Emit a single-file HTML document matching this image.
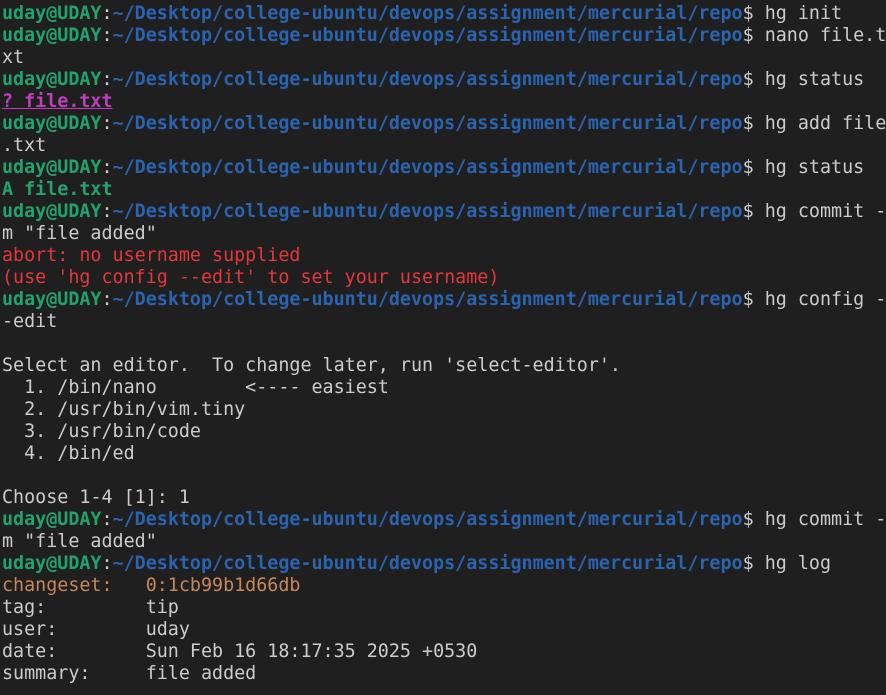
<!DOCTYPE html>
<html><head><meta charset="utf-8"><style>
html,body{margin:0;padding:0;background:#1f1f1f;width:886px;height:695px;overflow:hidden}
pre{margin:0;padding:3px 0 0 2px;font-family:"DejaVu Sans Mono","Liberation Mono",monospace;font-size:18.38px;line-height:22px;color:#cccccc;white-space:pre}
.g{color:#23a36b;font-weight:bold}
.b{color:#2a63b0;font-weight:bold}
.r{color:#e5373b}
.p{color:#bc3fbc;font-weight:bold;text-decoration:underline}
.a{color:#23a36b;font-weight:bold}
.o{color:#c7875a}
</style></head><body><pre><span class="g">uday@UDAY</span>:<span class="b">~/Desktop/college-ubuntu/devops/assignment/mercurial/repo</span>$ hg init
<span class="g">uday@UDAY</span>:<span class="b">~/Desktop/college-ubuntu/devops/assignment/mercurial/repo</span>$ nano file.t
xt
<span class="g">uday@UDAY</span>:<span class="b">~/Desktop/college-ubuntu/devops/assignment/mercurial/repo</span>$ hg status
<span class="p">? file.txt</span>
<span class="g">uday@UDAY</span>:<span class="b">~/Desktop/college-ubuntu/devops/assignment/mercurial/repo</span>$ hg add file
.txt
<span class="g">uday@UDAY</span>:<span class="b">~/Desktop/college-ubuntu/devops/assignment/mercurial/repo</span>$ hg status
<span class="a">A file.txt</span>
<span class="g">uday@UDAY</span>:<span class="b">~/Desktop/college-ubuntu/devops/assignment/mercurial/repo</span>$ hg commit -
m "file added"
<span class="r">abort: no username supplied</span>
<span class="r">(use 'hg config --edit' to set your username)</span>
<span class="g">uday@UDAY</span>:<span class="b">~/Desktop/college-ubuntu/devops/assignment/mercurial/repo</span>$ hg config -
-edit

Select an editor.  To change later, run 'select-editor'.
  1. /bin/nano        &lt;---- easiest
  2. /usr/bin/vim.tiny
  3. /usr/bin/code
  4. /bin/ed

Choose 1-4 [1]: 1
<span class="g">uday@UDAY</span>:<span class="b">~/Desktop/college-ubuntu/devops/assignment/mercurial/repo</span>$ hg commit -
m "file added"
<span class="g">uday@UDAY</span>:<span class="b">~/Desktop/college-ubuntu/devops/assignment/mercurial/repo</span>$ hg log
<span class="o">changeset:   0:1cb99b1d66db</span>
tag:         tip
user:        uday
date:        Sun Feb 16 18:17:35 2025 +0530
summary:     file added</pre></body></html>
